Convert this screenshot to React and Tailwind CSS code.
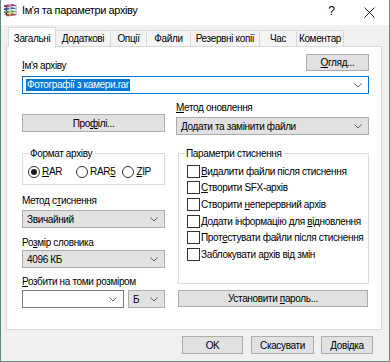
import React from 'react';

// access-key letter
const U = ({ children }) => <span className="underline underline-offset-[1px] decoration-[1px]">{children}</span>;

const Chevron = () => (
  <svg width="8" height="5" viewBox="0 0 8 5" className="shrink-0">
    <path d="M0.5 0.5 L4 4 L7.5 0.5" fill="none" stroke="#606060" strokeWidth="1" />
  </svg>
);

const RarIcon = () => (
  <svg width="14" height="14" viewBox="0 0 14 14">
    <path d="M1 2 L10 1 L13 2.5 L4 3.6 Z" fill="#b0389c" />
    <path d="M1 2 L4 3.6 L4 5 L1 3.4 Z" fill="#6a1f60" />
    <path d="M1 5.2 L10 4.2 L13 5.7 L4 6.8 Z" fill="#2d5fd0" />
    <path d="M1 5.2 L4 6.8 L4 8.2 L1 6.6 Z" fill="#1b347a" />
    <path d="M1 8.4 L10 7.4 L13 8.9 L4 10 Z" fill="#33a43c" />
    <path d="M1 8.4 L4 10 L4 11.4 L1 9.8 Z" fill="#1d6424" />
    <path d="M1 11.3 L10 10.3 L13 11.8 L4 13 Z" fill="#d43a2c" />
    <path d="M6 1 L8 0.8 L8 13 L6 13.2 Z" fill="#d8c9a0" opacity="0.9" />
    <path d="M4 3.6 L13 2.5 L13 12 L4 13 Z" fill="none" stroke="#333" strokeWidth="0.5" />
  </svg>
);

const Button = ({ className, children }) => (
  <div className={`flex items-center justify-center h-[17px] bg-[#e1e1e1] border border-[#adadad] ${className}`}>
    {children}
  </div>
);

const Select = ({ className, value, editable }) => (
  <div
    className={`flex items-center h-[18px] border ${
      editable ? 'bg-white border-[#7a7a7a]' : 'bg-[#e1e1e1] border-[#adadad]'
    } ${className}`}
  >
    <span className="flex-1 pl-[4px] whitespace-nowrap overflow-hidden">{value}</span>
    <span className="pr-[6px] flex items-center">
      <Chevron />
    </span>
  </div>
);

const Radio = ({ checked, children }) => (
  <div className="flex items-center">
    <span className="w-[12px] h-[12px] rounded-full border border-[#333] bg-white flex items-center justify-center">
      {checked && <span className="w-[6px] h-[6px] rounded-full bg-[#1a1a1a]" />}
    </span>
    <span className="ml-[2px]">{children}</span>
  </div>
);

const Check = ({ children }) => (
  <div className="flex items-center h-[16.6px]">
    <span className="w-[13px] h-[13px] border border-[#333] bg-white shrink-0" />
    <span className="ml-[1px] whitespace-nowrap">{children}</span>
  </div>
);

const tabs = [
  { label: 'Додаткові', w: 'w-[55px]' },
  { label: 'Опції', w: 'w-[36px]' },
  { label: 'Файли', w: 'w-[44px]' },
  { label: 'Резервні копії', w: 'w-[69px]' },
  { label: 'Час', w: 'w-[37px]' },
  { label: 'Коментар', w: 'w-[47px]' },
];

export default function App() {
  return (
    <div className="w-[390px] h-[362px] flex flex-col bg-[#f0f0f0] border-x border-b border-[#5d8a7c] overflow-hidden text-black text-[10px] leading-[13px] tracking-[-0.35px] font-['Liberation_Sans',Arial,sans-serif]">
      {/* Title bar */}
      <div className="h-[25px] shrink-0 bg-white flex items-start pt-[3px] pl-[2px]">
        <RarIcon />
        <span className="ml-[5px] text-[11px] leading-[14px] tracking-[-0.4px]">Ім'я та параметри архіву</span>
        <span className="ml-auto text-[12px] leading-[14px] mt-[1px] tracking-normal">?</span>
        <svg width="11" height="11" viewBox="0 0 11 11" className="ml-[29px] mr-[14px] mt-[4px]">
          <path d="M0.5 0.5 L10.5 10.5 M10.5 0.5 L0.5 10.5" stroke="#222" strokeWidth="1" />
        </svg>
      </div>

      {/* Tabs + panel */}
      <div className="ml-[5px] w-[376px] flex flex-col">
        <div className="h-[21px] flex items-end pl-[2px]">
          <div className="relative z-10 -mb-px h-[20px] w-[48px] bg-white border-x border-t border-[#d9d9d9] flex items-start justify-center pt-[4px]">
            Загальні
          </div>
          {tabs.map((t) => (
            <div
              key={t.label}
              className={`h-[16px] ${t.w} bg-[#f4f4f4] border-t border-r border-[#d9d9d9] flex items-center justify-center whitespace-nowrap`}
            >
              {t.label}
            </div>
          ))}
        </div>

        <div className="h-[284px] bg-white border border-[#d9d9d9] pl-[15px] pr-[12px] pt-[7px]">
          <div className="flex items-start justify-between">
            <span className="mt-[5px]">
              <U>І</U>м'я архіву
            </span>
            <Button className="w-[63px]">
              <span>
                <U>О</U>гляд...
              </span>
            </Button>
          </div>

          <div className="mt-[4px] h-[18px] border border-[#0078d7] flex items-center">
            <span className="ml-[3px] bg-[#0078d7] text-white leading-[12px] px-px">Фотографії з камери.rar</span>
            <span className="ml-auto pr-[6px] flex items-center">
              <Chevron />
            </span>
          </div>

          <div className="flex gap-[11px]">
            {/* left column */}
            <div className="w-[143px] flex flex-col">
              <Button className="mt-[20px] h-[18px]">
                <span>
                  Про<U>ф</U>ілі...
                </span>
              </Button>

              <div className="mt-[21px] h-[32px] border border-[#dcdcdc] flex flex-col">
                <span className="-mt-[7px] ml-[6px] px-px bg-white self-start">Формат архіву</span>
                <div className="mt-[5px] ml-[5px] flex items-center">
                  <Radio checked>
                    <U>R</U>AR
                  </Radio>
                  <span className="ml-[14px]">
                    <Radio>
                      RAR<U>5</U>
                    </Radio>
                  </span>
                  <span className="ml-[7px]">
                    <Radio>
                      <U>Z</U>IP
                    </Radio>
                  </span>
                </div>
              </div>

              <span className="mt-[9px]">
                Метод с<U>т</U>иснення
              </span>
              <Select className="mt-[3px]" value="Звичайний" />

              <span className="mt-[8px]">
                Ро<U>з</U>мір словника
              </span>
              <Select className="mt-[1px]" value="4096 КБ" />

              <span className="mt-[7px]">
                <U>Р</U>озбити на томи розміром
              </span>
              <div className="mt-[2px] flex gap-[4px]">
                <Select className="w-[102px]" value="" editable />
                <Select className="flex-1" value="Б" />
              </div>
            </div>

            {/* right column */}
            <div className="w-[193px] flex flex-col">
              <span className="mt-[7px]">
                <U>М</U>етод оновлення
              </span>
              <Select className="mt-[3px]" value="Додати та замінити файли" />

              <div className="mt-[18px] ml-[2px] h-[131px] border border-[#dcdcdc] flex flex-col pl-[8px]">
                <span className="-mt-[7px] ml-[-2px] px-px bg-white self-start">Параметри стиснення</span>
                <div className="mt-[3px] flex flex-col">
                  <Check>
                    <U>В</U>идалити файли після стиснення
                  </Check>
                  <Check>
                    <U>С</U>творити SFX-архів
                  </Check>
                  <Check>
                    Створити <U>н</U>еперервний архів
                  </Check>
                  <Check>
                    Додати інформацію для <U>в</U>ідновлення
                  </Check>
                  <Check>
                    Прот<U>е</U>стувати файли після стиснення
                  </Check>
                  <Check>
                    Заблокувати а<U>р</U>хів від змін
                  </Check>
                </div>
              </div>

              <Button className="mt-[6px] ml-[2px] mr-px">
                <span>
                  Установити <U>п</U>ароль...
                </span>
              </Button>
            </div>
          </div>
        </div>
      </div>

      {/* bottom buttons */}
      <div className="mt-[6px] flex justify-end pr-[16px]">
        <Button className="w-[61px] h-[18px] border-[#0078d7]">OK</Button>
        <Button className="ml-[8px] w-[63px] h-[18px]">Скасувати</Button>
        <Button className="ml-[7px] w-[52px] h-[18px]">Довідка</Button>
      </div>
    </div>
  );
}
